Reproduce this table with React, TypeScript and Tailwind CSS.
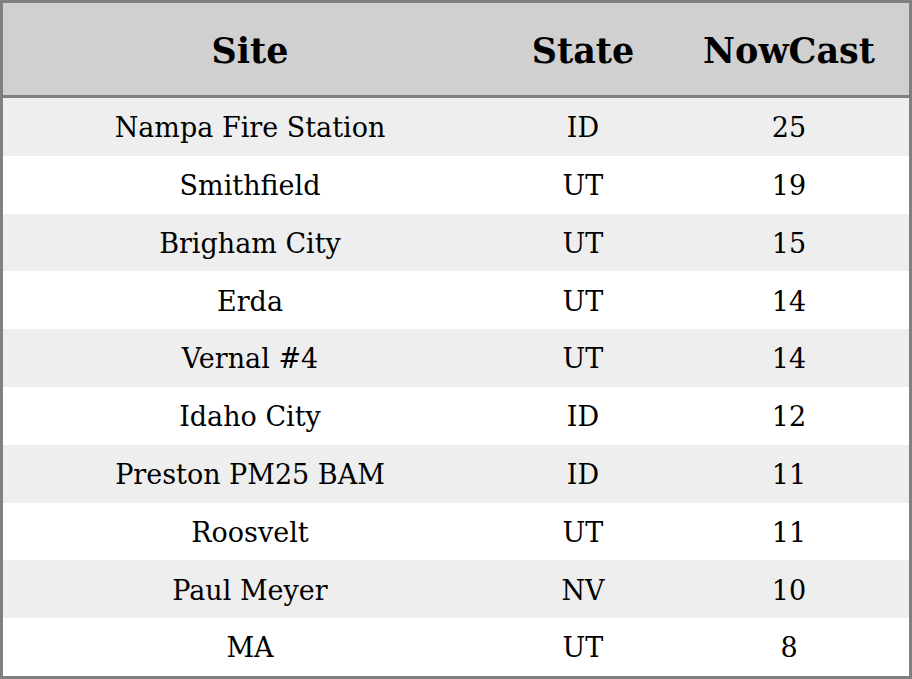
const rows: [string, string, string][] = [
  ["Nampa Fire Station", "ID", "25"],
  ["Smithfield", "UT", "19"],
  ["Brigham City", "UT", "15"],
  ["Erda", "UT", "14"],
  ["Vernal #4", "UT", "14"],
  ["Idaho City", "ID", "12"],
  ["Preston PM25 BAM", "ID", "11"],
  ["Roosvelt", "UT", "11"],
  ["Paul Meyer", "NV", "10"],
  ["MA", "UT", "8"],
];

const cols = "grid grid-cols-[494px_172px_240px] items-center text-center";

export default function App() {
  return (
    <div className="w-[912px] h-[679px] flex flex-col border-[3px] border-[#808080] bg-white text-black font-['DejaVu_Serif',serif]">
      <div className={`${cols} h-[95px] pt-[4px] shrink-0 bg-[#d0d0d0] border-b-[3px] border-[#808080] text-[35px] font-bold`}>
        <div>Site</div>
        <div>State</div>
        <div>NowCast</div>
      </div>
      <div className="flex-1 flex flex-col">
        {rows.map((r, i) => (
          <div
            key={i}
            className={`${cols} flex-1 pt-[3px] text-[27px] ${i % 2 === 0 ? "bg-[#eeeeee]" : "bg-white"}`}
          >
            <div>{r[0]}</div>
            <div>{r[1]}</div>
            <div>{r[2]}</div>
          </div>
        ))}
      </div>
    </div>
  );
}
